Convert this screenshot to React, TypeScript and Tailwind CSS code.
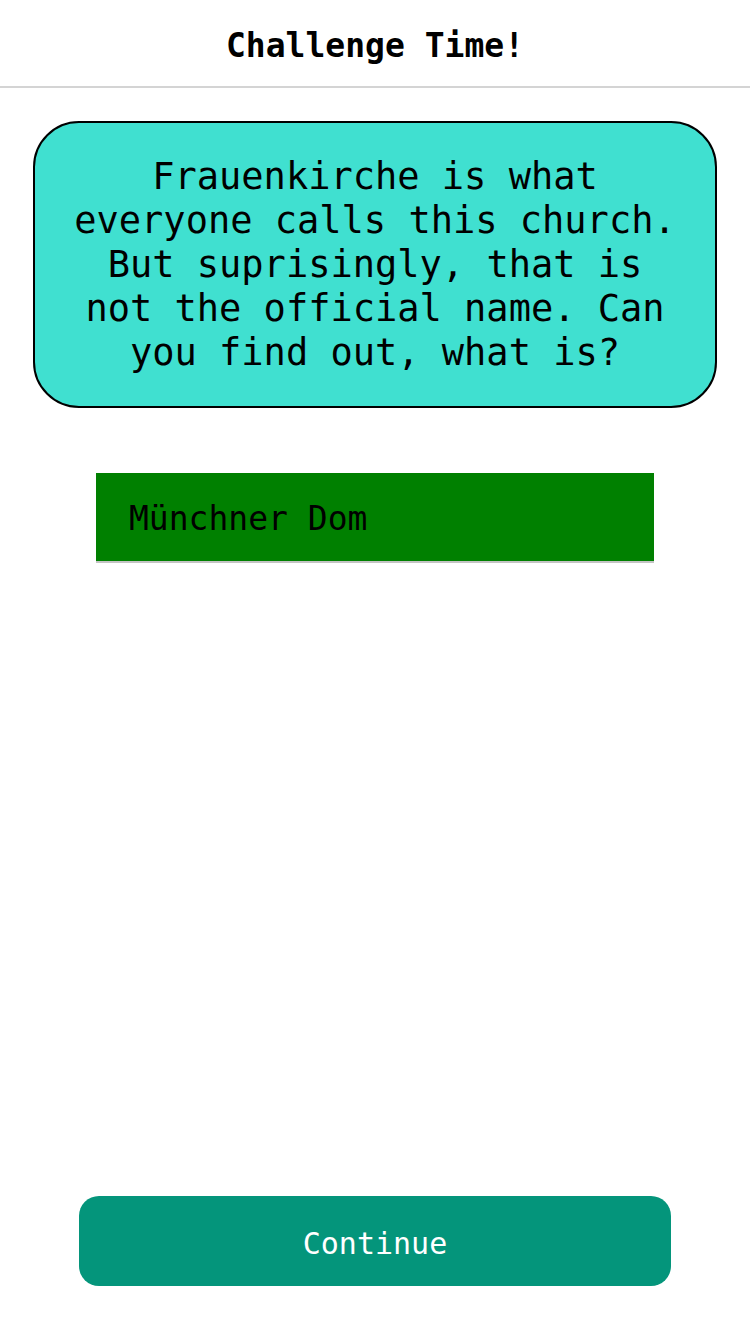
export default function App() {
  return (
    <div className="flex h-[1334px] w-full flex-col bg-white font-['DejaVu_Sans_Mono','Liberation_Mono',monospace] text-black">
      {/* Header */}
      <header className="flex h-[88px] items-center justify-center border-b-2 border-[#d4d4d4] pt-[6px]">
        <h1 className="text-[33px] font-bold">Challenge Time!</h1>
      </header>

      {/* Question */}
      <div className="mx-[33px] mt-[33px] flex h-[287px] items-center justify-center rounded-[46px] border-2 border-black bg-[#40e0d0] px-[38px]">
        <p className="text-center text-[37px] leading-[44px]">
          Frauenkirche is what everyone calls this church. But suprisingly, that is not the official name. Can you find out, what is?
        </p>
      </div>

      {/* Answer */}
      <div className="mx-auto mt-[65px] flex h-[90px] w-[558px] items-center border-b-2 border-[#c4c4c4] bg-[#008000] px-[33px] pt-[4px]">
        <span className="text-[33px]">Münchner Dom</span>
      </div>

      <div className="flex-1" />

      {/* Continue */}
      <button className="mx-auto mb-[48px] flex h-[90px] w-[592px] items-center justify-center rounded-[20px] bg-[#04957b] pt-[4px] text-[30px] font-medium text-white">
        Continue
      </button>
    </div>
  );
}
